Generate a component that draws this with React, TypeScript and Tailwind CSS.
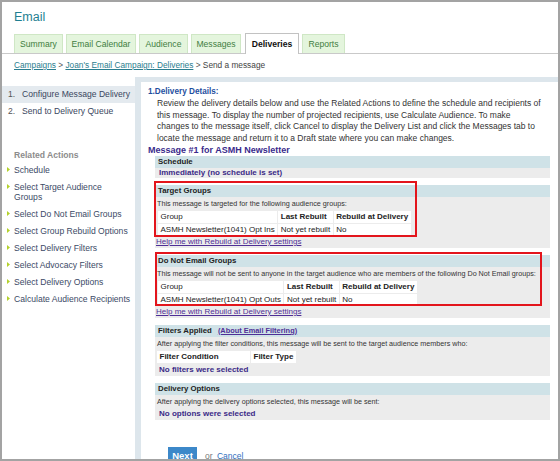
import React from "react";

const tabs = [
  { label: "Summary", cls: "w-[49px]" },
  { label: "Email Calendar", cls: "w-[70px]" },
  { label: "Audience", cls: "w-[49px]" },
  { label: "Messages", cls: "w-[50px]" },
];

function Tab({ label, cls }: { label: string; cls: string }) {
  return (
    <div
      className={`${cls} h-[19px] flex items-center justify-center border border-b-0 border-[#cfe7c5] bg-[#e4f5dd] text-[8.6px] text-[#3f7d3f] whitespace-nowrap`}
    >
      {label}
    </div>
  );
}

function Bullet() {
  return (
    <svg width="3" height="5" viewBox="0 0 3 5" className="shrink-0 mt-[2px]">
      <polygon points="0,0 3,2.5 0,5" fill="#b4d12c" />
    </svg>
  );
}

const related: React.ReactNode[] = [
  "Schedule",
  <>
    Select Target Audience
    <br />
    Groups
  </>,
  "Select Do Not Email Groups",
  "Select Group Rebuild Options",
  "Select Delivery Filters",
  "Select Advocacy Filters",
  "Select Delivery Options",
  "Calculate Audience Recipients",
];

function Header({ children }: { children: React.ReactNode }) {
  return (
    <div className="h-[12px] bg-[#cfe2e7] pl-[3px] text-[7.8px] font-bold leading-[12px] text-[#222] whitespace-nowrap flex items-center">
      {children}
    </div>
  );
}

function Desc({ children }: { children: React.ReactNode }) {
  return (
    <div className="pl-[2px] h-[13px] text-[7.2px] leading-[13px] text-[#333] whitespace-nowrap">
      {children}
    </div>
  );
}

function GroupTable({ name }: { name: string }) {
  return (
    <table className="ml-[2px] border-separate border-spacing-[1px] text-[8px] leading-[12px] text-[#222]">
      <tbody>
        <tr>
          <td className="bg-white px-[2.5px] h-[12px] py-0 whitespace-nowrap">Group</td>
          <td className="bg-white px-[2.5px] h-[12px] py-0 whitespace-nowrap font-bold">Last Rebuilt</td>
          <td className="bg-white px-[2.5px] h-[12px] py-0 whitespace-nowrap font-bold">Rebuild at Delivery</td>
        </tr>
        <tr>
          <td className="bg-white px-[2.5px] h-[12px] py-0 whitespace-nowrap">{name}</td>
          <td className="bg-white px-[2.5px] h-[12px] py-0 whitespace-nowrap">Not yet rebuilt</td>
          <td className="bg-white px-[2.5px] h-[12px] py-0 whitespace-nowrap">No</td>
        </tr>
      </tbody>
    </table>
  );
}

function HelpLink() {
  return (
    <div className="pl-[1px] pb-[1px] h-[11px] text-[8px] leading-[10px] text-[#4f2f96] underline whitespace-nowrap">
      Help me with Rebuild at Delivery settings
    </div>
  );
}

export default function App() {
  return (
    <div className="w-[560px] h-[461px] overflow-hidden border-2 border-[#a3a3a3] bg-white flex flex-col font-['Liberation_Sans',Arial,sans-serif]">
      {/* Title */}
      <div className="pl-[12px] pt-[7px] h-[23px] text-[12.5px] leading-[16px] text-[#1f7f92]">Email</div>

      {/* Tabs */}
      <div className="mt-[8px] h-[21px] flex items-end gap-[3px] pl-[12px] border-b border-[#c9c9c9] shrink-0">
        {tabs.map((t) => (
          <Tab key={t.label} label={t.label} cls={t.cls} />
        ))}
        <div className="w-[54px] h-[21px] -mb-px flex items-center justify-center border border-b-0 border-[#c2c2c2] bg-white text-[8.6px] font-bold text-[#111] ml-[1px]">
          Deliveries
        </div>
        <Tab label="Reports" cls="w-[43px]" />
      </div>

      {/* Breadcrumb */}
      <div className="mt-[5px] h-[12px] pl-[12px] text-[8.3px] leading-[12px] text-[#555] whitespace-nowrap shrink-0">
        <span className="text-[#2a7d8e] underline">Campaigns</span>
        <span> &gt; </span>
        <span className="text-[#2a7d8e] underline">Joan's Email Campaign: Deliveries</span>
        <span> &gt; </span>
        <span className="text-[#444]">Send a message</span>
      </div>

      {/* Main */}
      <div className="mt-[6px] flex flex-1 min-h-0">
        {/* Left nav */}
        <div className="w-[133px] shrink-0 pt-[9px]">
          <div className="h-[17px] flex items-center bg-[#e4eaef] pl-[6px] text-[8.6px] text-[#3a4760] whitespace-nowrap">
            <span className="w-[14px] text-[#555]">1.</span>
            <span>Configure Message Delivery</span>
          </div>
          <div className="h-[17px] flex items-center pl-[6px] text-[8.6px] text-[#3a4760] whitespace-nowrap">
            <span className="w-[14px] text-[#555]">2.</span>
            <span>Send to Delivery Queue</span>
          </div>
          <div className="mt-[30px] h-[10px] pl-[12px] text-[8.6px] leading-[10px] font-bold text-[#8c8c8c] whitespace-nowrap">
            Related Actions
          </div>
          <div className="mt-[5px] flex flex-col gap-[7px]">
            {related.map((r, i) => (
              <div key={i} className="flex gap-[4px] pl-[5px] text-[8.6px] leading-[10px] text-[#3b4a66] whitespace-nowrap">
                <Bullet />
                <span>{r}</span>
              </div>
            ))}
          </div>
        </div>

        {/* Right panel */}
        <div className="flex-1 min-w-0 bg-[#dde6ec] pl-[6px] pt-[5px] flex flex-col">
          <div className="flex-1 bg-white pt-[4px] pl-[7px] pr-[8px]">
            <div className="h-[12px] text-[8.2px] leading-[12px] font-bold text-[#1f4fa0]">1.Delivery Details:</div>
            <div className="pl-[9px] text-[8.5px] leading-[11.5px] text-[#333] whitespace-nowrap">
              Review the delivery details below and use the Related Actions to define the schedule and recipients of
              <br />
              this message. To display the number of projected recipients, use Calculate Audience. To make
              <br />
              changes to the message itself, click Cancel to display the Delivery List and click the Messages tab to
              <br />
              locate the message and return it to a Draft state where you can make changes.
            </div>
            <div className="h-[12px] text-[9px] leading-[12px] font-bold text-[#3a2b8c] whitespace-nowrap">
              Message #1 for ASMH Newsletter
            </div>

            <div className="ml-[7px]">
              {/* Schedule */}
              <div className="bg-[#ececec]">
                <Header>Schedule</Header>
                <div className="h-[10px] pl-[4px] text-[8px] leading-[10px] font-bold text-[#3b2a87] whitespace-nowrap">
                  Immediately (no schedule is set)
                </div>
              </div>

              {/* Target Groups */}
              <div className="mt-[7px] bg-[#ececec] relative">
                <Header>Target Groups</Header>
                <Desc>This message is targeted for the following audience groups:</Desc>
                <GroupTable name="ASMH Newsletter(1041) Opt Ins" />
                <HelpLink />
                <div className="absolute left-[-1px] top-[-4px] w-[263px] h-[56px] border-2 border-[#e3151c] pointer-events-none" />
              </div>

              {/* Do Not Email Groups */}
              <div className="mt-[7px] bg-[#ececec] relative">
                <Header>Do Not Email Groups</Header>
                <Desc>
                  This message will not be sent to anyone in the target audience who are members of the following Do Not Email groups:
                </Desc>
                <GroupTable name="ASMH Newsletter(1041) Opt Outs" />
                <HelpLink />
                <div className="absolute left-0 top-[-3px] w-[387px] h-[54px] border-2 border-[#e3151c] pointer-events-none" />
              </div>

              {/* Filters Applied */}
              <div className="mt-[7px] bg-[#ececec]">
                <Header>
                  <span>Filters Applied</span>
                  <span className="ml-[6px] text-[7.4px] text-[#4f2f96] underline">(About Email Filtering)</span>
                </Header>
                <Desc>After applying the filter conditions, this message will be sent to the target audience members who:</Desc>
                <table className="ml-[1px] border-separate border-spacing-[1px] text-[8px] leading-[12px] text-[#222]">
                  <tbody>
                    <tr>
                      <td className="bg-white w-[93px] px-[2.5px] h-[12px] py-0 whitespace-nowrap font-bold">Filter Condition</td>
                      <td className="bg-white px-[2.5px] h-[12px] py-0 whitespace-nowrap font-bold">Filter Type</td>
                    </tr>
                  </tbody>
                </table>
                <div className="h-[12px] pl-[4px] pb-[1px] text-[8px] leading-[11px] font-bold text-[#3b2a87] whitespace-nowrap">
                  No filters were selected
                </div>
              </div>

              {/* Delivery Options */}
              <div className="mt-[7px] bg-[#ececec]">
                <Header>Delivery Options</Header>
                <Desc>After applying the delivery options selected, this message will be sent:</Desc>
                <div className="h-[12px] pl-[4px] pb-[1px] text-[8px] leading-[11px] font-bold text-[#3b2a87] whitespace-nowrap">
                  No options were selected
                </div>
              </div>
            </div>

            {/* Buttons */}
            <div className="mt-[27px] ml-[20px] flex items-start gap-[8px]">
              <div className="w-[29px] h-[17px] bg-[#3c88c9] text-white text-[9.5px] font-bold leading-[15px] flex items-center justify-center">
                Next
              </div>
              <div className="pt-[3px] text-[8.5px] leading-[12px] text-[#777] whitespace-nowrap">
                or <span className="ml-[2px] text-[#2f6fbe] underline">Cancel</span>
              </div>
            </div>
          </div>
        </div>
      </div>
    </div>
  );
}
